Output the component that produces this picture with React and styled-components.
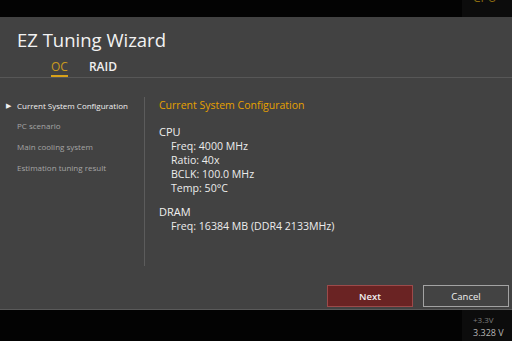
import React, { useState } from "react";
import styled, { createGlobalStyle } from "styled-components";

const GlobalStyle = createGlobalStyle`
  html, body {
    margin: 0;
    padding: 0;
    background: #050505;
  }
  body {
    font-family: "Open Sans", "Noto Sans", sans-serif;
  }
`;

const navItems = [
  "Current System Configuration",
  "PC scenario",
  "Main cooling system",
  "Estimation tuning result",
];

const config = [
  { title: "CPU", rows: ["Freq: 4000 MHz", "Ratio: 40x", "BCLK: 100.0 MHz", "Temp: 50°C"] },
  { title: "DRAM", rows: ["Freq: 16384 MB (DDR4 2133MHz)"] },
];

function App() {
  const [tab, setTab] = useState("OC");
  const [step, setStep] = useState(0);

  return (
    <Screen>
      <GlobalStyle />
      <Strip $height={17}>
        <Readout>
          <CutLabel>CPU</CutLabel>
        </Readout>
      </Strip>

      <Dialog>
        <Title>EZ Tuning Wizard</Title>
        <Tabs>
          {["OC", "RAID"].map((t) => (
            <Tab key={t} $active={tab === t} onClick={() => setTab(t)}>
              {t}
            </Tab>
          ))}
        </Tabs>

        <Body>
          <Nav>
            {navItems.map((item, i) => (
              <NavItem key={item} $active={step === i} onClick={() => setStep(i)}>
                <Marker>{step === i ? "▶" : ""}</Marker>
                {item}
              </NavItem>
            ))}
          </Nav>

          <Content>
            <Heading>Current System Configuration</Heading>
            {config.map((group) => (
              <Group key={group.title}>
                <GroupTitle>{group.title}</GroupTitle>
                {group.rows.map((row) => (
                  <Row key={row}>{row}</Row>
                ))}
              </Group>
            ))}
          </Content>
        </Body>

        <Footer>
          <Button $primary>Next</Button>
          <Button>Cancel</Button>
        </Footer>
      </Dialog>

      <Strip $height={31}>
        <Readout>
          <VoltLabel>+3.3V</VoltLabel>
          <VoltValue>3.328 V</VoltValue>
        </Readout>
      </Strip>
    </Screen>
  );
}

export default App;

const Screen = styled.div`
  width: 512px;
  height: 341px;
  display: flex;
  flex-direction: column;
  overflow: hidden;
  background: #050505;
`;

const Strip = styled.div`
  height: ${(p) => p.$height}px;
  flex-shrink: 0;
  display: flex;
  justify-content: flex-end;
  background: #030303;
`;

const Readout = styled.div`
  width: 50px;
  background: #0c0c0c;
  display: flex;
  flex-direction: column;
  padding-left: 11px;
  box-sizing: border-box;
  overflow: hidden;
`;

const CutLabel = styled.div`
  margin-top: -9px;
  font-size: 12px;
  line-height: 14px;
  color: #8a6a10;
`;

const VoltLabel = styled.div`
  margin-top: 4px;
  font-size: 8px;
  line-height: 12px;
  color: #7d7d7d;
`;

const VoltValue = styled.div`
  font-size: 9px;
  line-height: 14px;
  color: #b5b5b5;
`;

const Dialog = styled.div`
  flex: 1;
  display: flex;
  flex-direction: column;
  background: #424242;
  border-bottom: 1px solid #5a5a5a;
`;

const Title = styled.h1`
  margin: 0;
  padding: 9px 0 0 17px;
  font-size: 18.5px;
  font-weight: 400;
  line-height: 27px;
  color: #f2f2f2;
`;

const Tabs = styled.div`
  display: flex;
  gap: 21px;
  padding-left: 51px;
  margin-top: 6px;
  border-bottom: 1px solid #575757;
`;

const Tab = styled.div`
  font-size: 12px;
  line-height: 16px;
  font-weight: ${(p) => (p.$active ? 400 : 600)};
  color: ${(p) => (p.$active ? "#c99a1e" : "#f0f0f0")};
  border-bottom: 2px solid ${(p) => (p.$active ? "#d9a21a" : "transparent")};
  cursor: pointer;
`;

const Body = styled.div`
  display: flex;
  margin-top: 19px;
  height: 169px;
`;

const Nav = styled.div`
  width: 144px;
  border-right: 1px solid #5c5c5c;
  display: flex;
  flex-direction: column;
  gap: 4.7px;
`;

const NavItem = styled.div`
  display: flex;
  align-items: center;
  height: 16px;
  font-size: 8px;
  color: ${(p) => (p.$active ? "#f0f0f0" : "#a5a5a5")};
  cursor: pointer;
`;

const Marker = styled.span`
  width: 17px;
  padding-left: 6px;
  box-sizing: border-box;
  font-size: 7px;
  color: #f0f0f0;
`;

const Content = styled.div`
  flex: 1;
  padding-left: 14px;
`;

const Heading = styled.div`
  font-size: 10.5px;
  line-height: 16px;
  color: #e6a100;
  margin-bottom: 12px;
`;

const Group = styled.div`
  margin-bottom: 10px;
`;

const GroupTitle = styled.div`
  font-size: 11px;
  line-height: 14px;
  color: #f0f0f0;
`;

const Row = styled.div`
  font-size: 10.6px;
  line-height: 14px;
  color: #ececec;
  padding-left: 12px;
`;

const Footer = styled.div`
  display: flex;
  justify-content: flex-end;
  gap: 10px;
  padding: 19px 3px 0 0;
`;

const Button = styled.button`
  width: 86px;
  height: 22px;
  box-sizing: border-box;
  font-family: inherit;
  font-size: 9.5px;
  font-weight: ${(p) => (p.$primary ? 600 : 400)};
  color: #f0f0f0;
  background: ${(p) => (p.$primary ? "#6a2323" : "#434343")};
  border: 1.5px solid ${(p) => (p.$primary ? "#9c4a4a" : "#a3a3a3")};
  cursor: pointer;
`;
